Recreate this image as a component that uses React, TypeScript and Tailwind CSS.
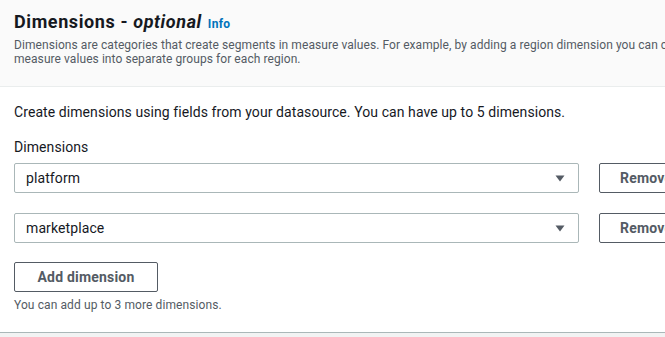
import React from "react";

function Select({ value }: { value: string }) {
  return (
    <div className="flex items-center gap-5">
      <div className="flex h-[30px] w-[565px] shrink-0 items-center justify-between rounded-[2px] border border-[#aab7b8] bg-white pl-[11px] pr-[13px] text-[14px] tracking-[0.1px] text-[#16191f]">
        <span>{value}</span>
        <svg width="10" height="7" viewBox="0 0 10 7" className="fill-[#545b64]">
          <polygon points="0.5,0.5 9.5,0.5 5,6.5" />
        </svg>
      </div>
      <button className="flex h-[30px] w-[100px] shrink-0 items-center rounded-[2px] border border-[#545b64] bg-white px-[20px] text-[14px] font-bold tracking-[0.2px] text-[#545b64]">
        Remove
      </button>
    </div>
  );
}

export default function App() {
  return (
    <div
      className="h-[337px] w-[665px] overflow-hidden bg-[#f2f3f3]"
      style={{ fontFamily: "Roboto, 'Liberation Sans', sans-serif" }}
    >
      <div className="border-b border-[#aab7b8] bg-white">
        <div className="h-[87px] border-b border-[#eaeded] bg-[#fafafa] px-[14px] pt-[11px]">
          <div className="flex items-baseline gap-[6px] whitespace-nowrap">
            <span className="text-[18px] font-bold leading-[22px] tracking-[0.6px] text-[#16191f]">
              Dimensions - <i>optional</i>
            </span>
            <span className="text-[12px] font-bold tracking-[0.3px] text-[#0073bb]">Info</span>
          </div>
          <p className="mt-[5px] whitespace-nowrap text-[12px] leading-[14px] tracking-[0.07px] text-[#545b64]">
            Dimensions are categories that create segments in measure values. For example, by adding a region dimension you can
            create
            <br />
            measure values into separate groups for each region.
          </p>
        </div>
        <div className="px-[14px] pt-[15px] pb-[19px]">
          <p className="text-[14px] leading-[20px] tracking-[0.08px] text-[#16191f]">
            Create dimensions using fields from your datasource. You can have up to 5 dimensions.
          </p>
          <p className="mt-[15px] text-[14px] leading-[20px] tracking-[0.08px] text-[#16191f]">Dimensions</p>
          <div className="mt-[6px] flex flex-col gap-[20px]">
            <Select value="platform" />
            <Select value="marketplace" />
          </div>
          <button className="mt-[19px] flex h-[30px] w-[144px] items-center justify-center rounded-[2px] border border-[#545b64] bg-white text-[14px] font-bold tracking-[0.2px] text-[#545b64]">
            Add dimension
          </button>
          <p className="mt-[5px] text-[12px] leading-[16px] tracking-[0.1px] text-[#545b64]">
            You can add up to 3 more dimensions.
          </p>
        </div>
      </div>
    </div>
  );
}
